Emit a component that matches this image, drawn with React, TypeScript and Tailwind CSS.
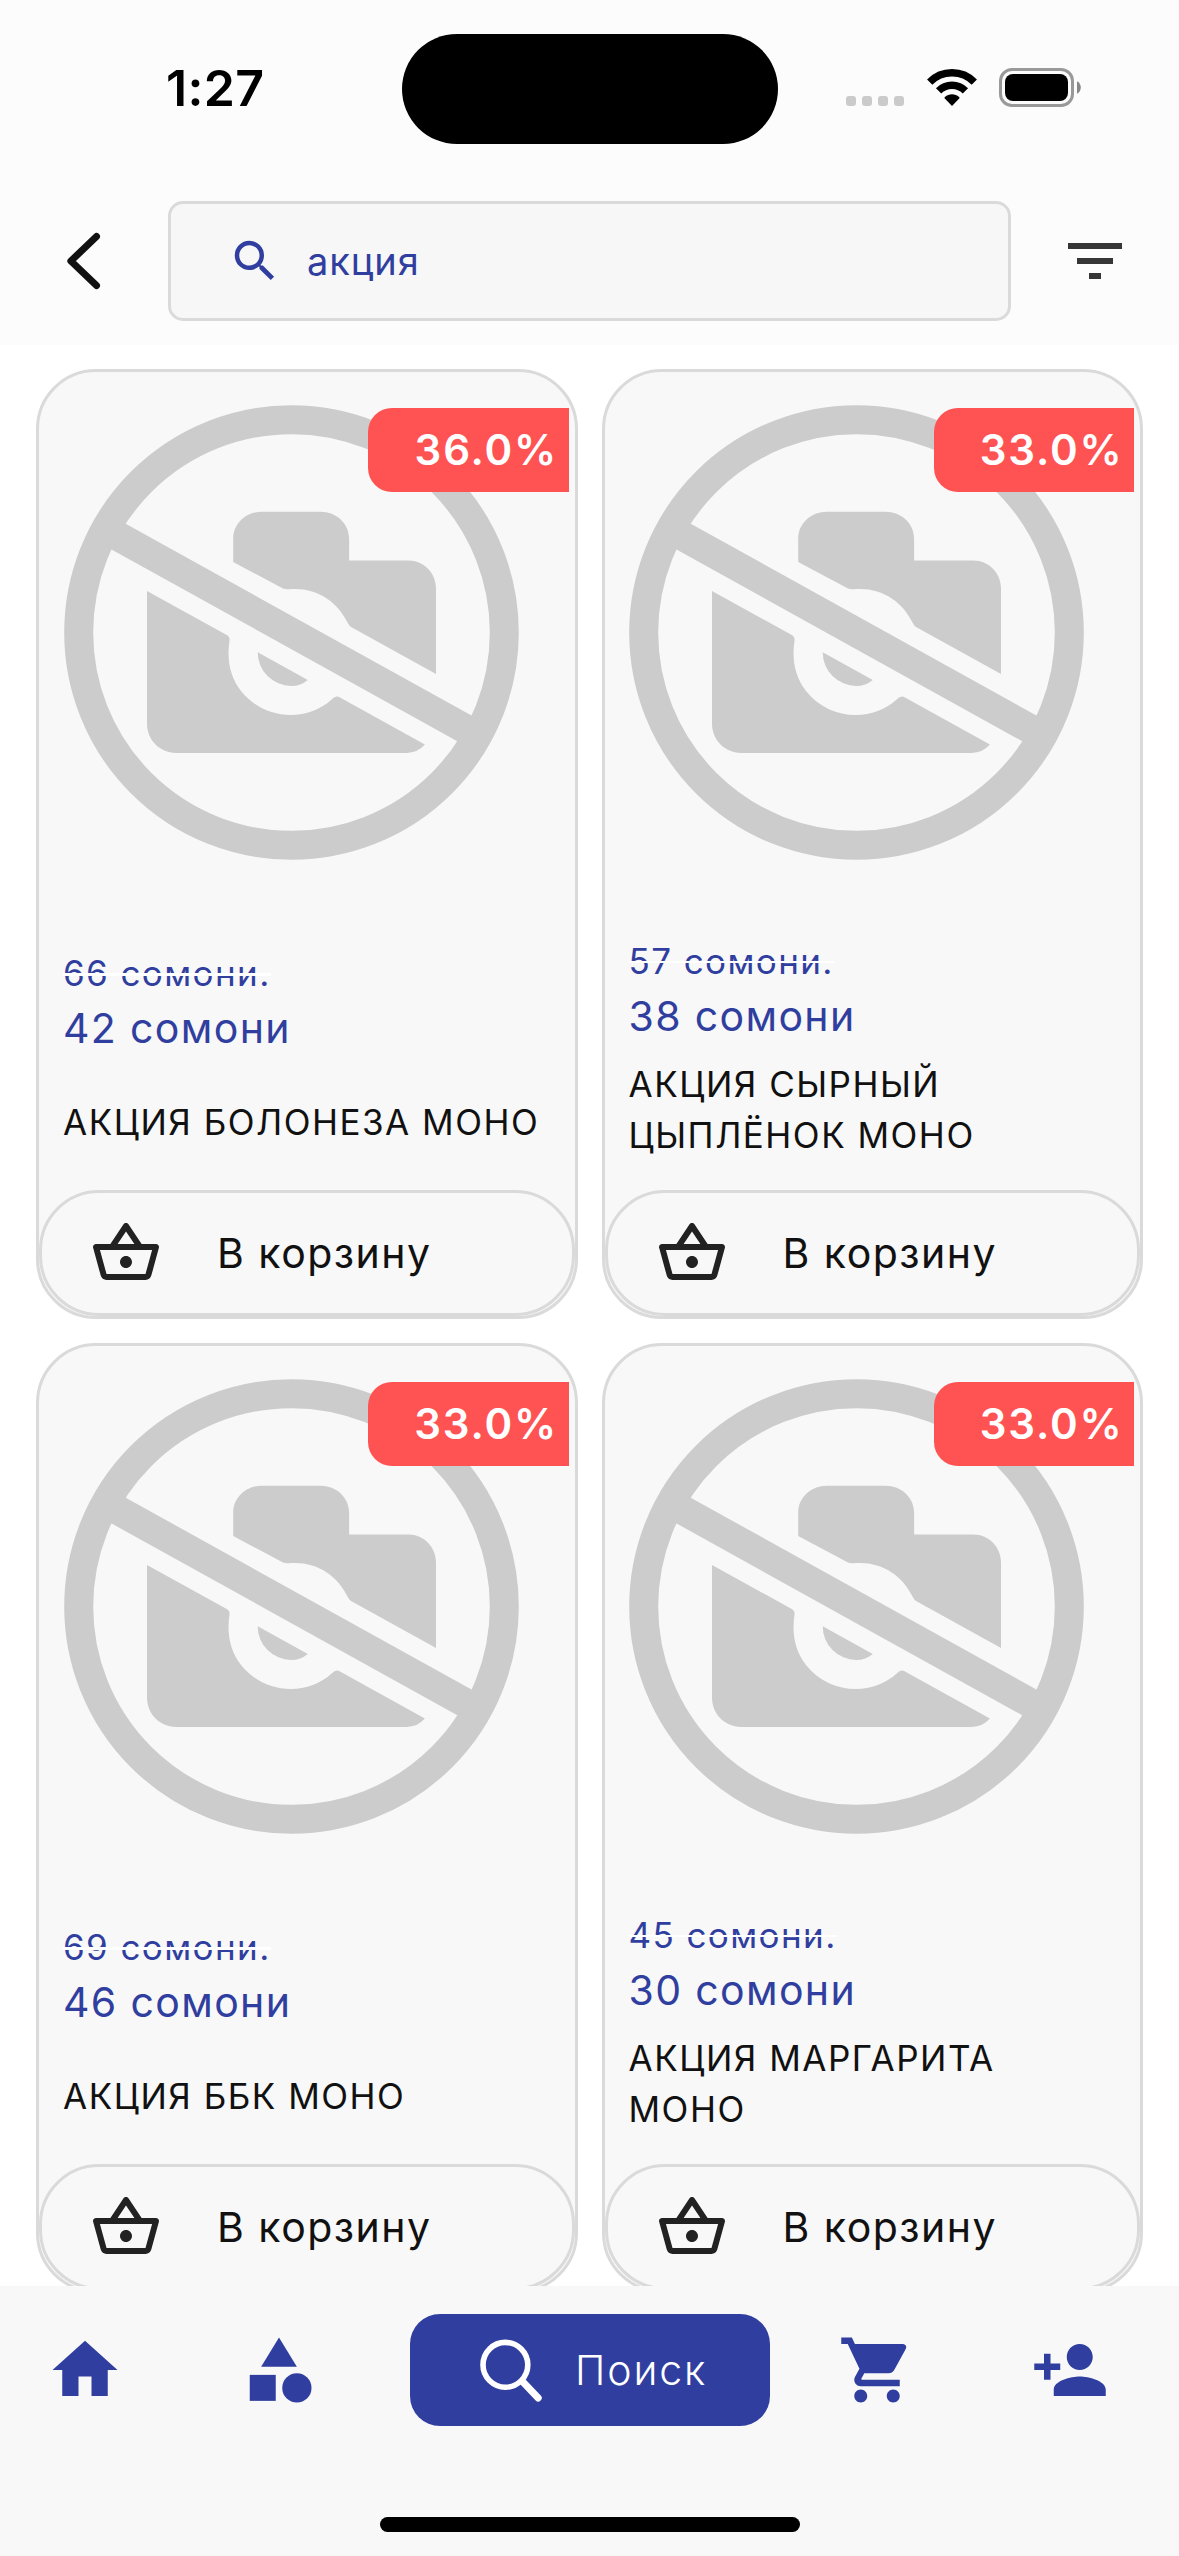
import {
  MdCategory,
  MdFilterList,
  MdHome,
  MdOutlineShoppingBasket,
  MdPersonAdd,
  MdSearch,
  MdShoppingCart,
} from "react-icons/md";

type Product = {
  name: string;
  oldPrice: number;
  price: number;
  discount: string;
};

const products: Product[] = [
  { name: "АКЦИЯ БОЛОНЕЗА МОНО", oldPrice: 66, price: 42, discount: "36.0%" },
  { name: "АКЦИЯ СЫРНЫЙ ЦЫПЛЁНОК МОНО", oldPrice: 57, price: 38, discount: "33.0%" },
  { name: "АКЦИЯ ББК МОНО", oldPrice: 69, price: 46, discount: "33.0%" },
  { name: "АКЦИЯ МАРГАРИТА МОНО", oldPrice: 45, price: 30, discount: "33.0%" },
];

function StatusBar() {
  return (
    <div className="flex h-[177px] shrink-0 items-center">
      <div className="mb-[2px] ml-[166px] w-[235.5px] text-[50px] leading-none font-semibold tracking-[0.3px] text-black">
        1:27
      </div>
      <div className="mt-px h-[110px] w-[376px] rounded-full bg-black" />
      <div className="mt-[25px] ml-[68.5px] flex gap-[6px]">
        {[0, 1, 2, 3].map((i) => (
          <span key={i} className="h-[10px] w-[10px] rounded-[3px] bg-[#cbcbcb]" />
        ))}
      </div>
      <svg className="mb-[2px] ml-[22.5px] h-[37px] w-[50px]" viewBox="0 0 50 37" fill="none">
        <path d="M2.7 13.1A31.3 31.3 0 0 1 47.3 13.1" stroke="#000" strokeWidth="7.4" />
        <path d="M11.6 21.8A18.8 18.8 0 0 1 38.4 21.8" stroke="#000" strokeWidth="7.4" />
        <path d="M25 37 17.8 29.6C17.4 29 17.4 28.4 17.9 28 22 24.4 28 24.4 32.1 28c.5.4.5 1 .1 1.6Z" fill="#000" />
      </svg>
      <svg className="mb-[2px] ml-[22.5px] h-[39px] w-[82px]" viewBox="0 0 82 39" fill="none">
        <rect x="1.5" y="1.5" width="72" height="36" rx="11.5" stroke="#999" strokeWidth="3" />
        <rect x="6" y="6" width="63" height="27" rx="8" fill="#000" />
        <path d="M78 13.3c2.3 1 3.8 3.4 3.8 6.2s-1.5 5.2-3.8 6.2Z" fill="#888" />
      </svg>
    </div>
  );
}

function SearchHeader() {
  return (
    <header className="flex h-[168px] shrink-0 items-center">
      <svg className="ml-[66px] h-[60px] w-[36px]" viewBox="0 0 36 60" fill="none">
        <path
          d="M30.5 5.5 4.9 30 30.5 54.5"
          stroke="#111"
          strokeWidth="7"
          strokeLinecap="round"
          strokeLinejoin="round"
        />
      </svg>
      <div className="ml-[66px] flex h-[120px] w-[843px] items-center rounded-[15px] border-[3px] border-[#dadada] bg-[#f7f7f7] pl-[57px] text-[#303f9f]">
        <MdSearch className="h-[54px] w-[54px]" />
        <span className="ml-[25px] text-[38px] leading-[50px] tracking-[0.9px]">акция</span>
      </div>
      <MdFilterList className="ml-[48px] h-[72px] w-[72px] text-[#363636]" />
    </header>
  );
}

function NoPhoto() {
  return (
    <svg className="h-[455px] w-[455px] shrink-0" viewBox="0 0 455 455" fill="none">
      <circle cx="227.5" cy="227.5" r="212.8" stroke="#ccc" strokeWidth="29" />
      <path d="M37 121.8 418 333.2" stroke="#ccc" strokeWidth="29.4" />
      <g fill="#ccc">
        <path d="M169.2 157.1V133.7C169.2 118.6 182 106.8 197.9 106.8H256.4C272.5 106.8 285.1 118.6 285.1 133.7V155.4H344.4C360 155.4 372 168 372 183.3V269L287.5 222.3Q285.3 221.2 284.2 218.8C274 197.5 255 184 231 184 226 184 221.5 184.6 218.5 183.2Z" />
        <path d="M83 186 163.2 230.2Q165.8 231.8 165.6 235C162.5 254 166 272 177 286 201 316 243.5 317 267.9 294.2Q272 289.8 276 292.5L360.9 339.5Q353.5 347.9 342.5 347.9H112C95.5 347.9 83 335 83 318.6Z" />
        <path d="M193.7 247.3 243.8 274.9Q236.5 280.9 227.3 280.9A33.6 33.6 0 0 1 193.7 247.3Z" />
      </g>
    </svg>
  );
}

function ProductCard({ product }: { product: Product }) {
  return (
    <article className="relative flex h-[950px] flex-col rounded-[60px] border-[3px] border-[#dadada] bg-[#f8f8f8]">
      <div className="pt-[33px] pl-[24.5px]">
        <NoPhoto />
      </div>
      <div className="absolute top-[36px] right-[6px] flex h-[84px] w-[200.5px] items-center justify-end rounded-l-[24px] bg-[#ff5252] pr-[10.5px] text-[42px] leading-none font-semibold tracking-[1.8px] text-white">
        {product.discount}
      </div>
      <div className="flex h-[330px] flex-col justify-around pt-[69px] pr-[24px] pb-[22.5px] pl-[24px]">
        <div className="text-[#303f9f]">
          <div className="relative w-fit text-[35px] leading-[51px] tracking-[1.4px]">
            {product.oldPrice} сомони.
            <span className="absolute top-[25px] right-0 left-0 h-[2.5px] bg-white" />
          </div>
          <div className="text-[41px] leading-[59px] tracking-[1.35px]">{product.price} сомони</div>
        </div>
        <div className="text-[35px] leading-[51px] tracking-[1.5px] text-[#111]">{product.name}</div>
      </div>
      <button className="flex h-[126px] w-full items-center rounded-[60px] border-[3px] border-[#dadada] bg-[#f8f8f8] pl-[48px]">
        <MdOutlineShoppingBasket className="h-[72px] w-[72px] text-[#222]" />
        <span className="ml-[55px] text-[41px] leading-[50px] tracking-[1.5px] text-[#111]">В корзину</span>
      </button>
    </article>
  );
}

function BottomNav() {
  return (
    <nav className="h-[270px] shrink-0 bg-[#f8f8f8] pt-[28px] text-[#303f9f]">
      <div className="flex h-[112px] items-center pl-[46px]">
        <MdHome className="h-[78px] w-[78px] shrink-0" />
        <MdCategory className="ml-[115.5px] h-[78px] w-[78px] shrink-0" />
        <div className="ml-[92px] flex h-[112px] w-[360px] shrink-0 items-center rounded-[30px] bg-[#303f9f] text-white">
          <svg className="ml-[69.5px] h-[66px] w-[66px]" viewBox="0 0 66 66" fill="none" stroke="#fff">
            <circle cx="26.4" cy="27.8" r="22.4" strokeWidth="5.6" />
            <path d="m44 45 15.2 16" strokeWidth="7" strokeLinecap="round" />
          </svg>
          <span className="ml-[30px] text-[41px] leading-[50px] font-light tracking-[1.9px]">Поиск</span>
        </div>
        <MdShoppingCart className="ml-[68px] h-[78px] w-[78px] shrink-0" />
        <MdPersonAdd className="ml-[115.25px] h-[78px] w-[78px] shrink-0" />
      </div>
      <div className="mx-auto mt-[91px] h-[15px] w-[420px] rounded-full bg-black" />
    </nav>
  );
}

export default function App() {
  return (
    <div className="flex h-[2556px] w-[1179px] flex-col overflow-hidden bg-white font-['Inter',sans-serif]">
      <div className="shrink-0 bg-[#fcfcfc]">
        <StatusBar />
        <SearchHeader />
      </div>
      <main className="grid min-h-0 flex-1 auto-rows-max grid-cols-2 content-start gap-[24px] overflow-hidden px-[36px] pt-[24px]">
        {products.map((product) => (
          <ProductCard key={product.name} product={product} />
        ))}
      </main>
      <BottomNav />
    </div>
  );
}
